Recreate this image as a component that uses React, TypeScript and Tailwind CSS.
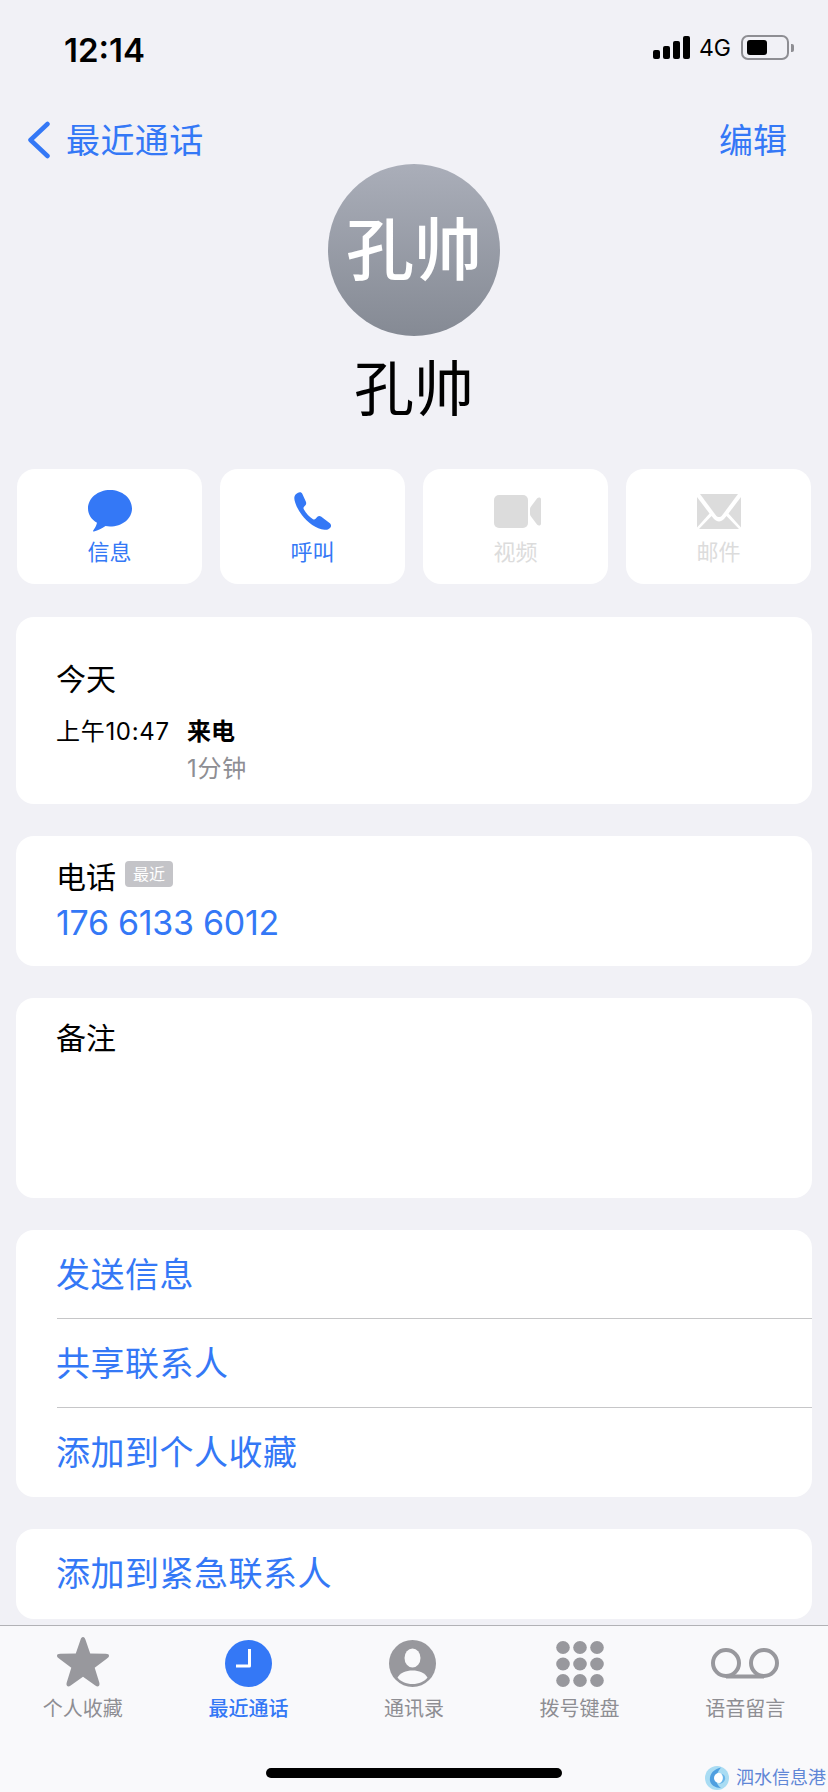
import type { ReactNode } from "react";

const BLUE = "#3478f6";

const MessageIcon = () => (
  <svg width="46" height="42" viewBox="0 0 46 42">
    <path
      fill={BLUE}
      d="M23 0C35 0 45 8 45 18.500S35 36.500 23 36.500C21.400 36.500 20 36.300 18.500 36C15 38.500 11 40.500 7 41.500C6.300 41.700 5.800 41 6.200 40.500C7.800 38.500 9.300 35.800 10 32.800C4.500 29.500 1 24.500 1 18.500C1 8 11 0 23 0Z"
    />
  </svg>
);

const PhoneIcon = () => (
  <svg width="38" height="38" viewBox="0 0 38 38">
    <path
      fill={BLUE}
      d="M4 .8C6-.2 7.600.3 8.500 2.200L11.800 9.500C12.500 11 12.300 12.300 11.200 13.400L10 14.700C9.300 15.500 9.300 16.300 9.800 17.300C12.100 21.300 15.400 25 19 27.200C20 27.800 20.800 27.600 21.600 26.800L23.400 24.800C24.500 23.700 25.800 23.600 27 24.600L34.900 30.500C37.400 32.300 37.700 34.200 36 36C34.500 37.500 32.800 38 30.500 37.800C22.500 36.800 13.500 31 7.500 22.500C2.500 15.500 .2 9.200 .3 5.800C.4 3.500 1.800 1.800 4 .8Z"
    />
  </svg>
);

const VideoIcon = () => (
  <svg width="48" height="33" viewBox="0 0 48 33" className="ml-[5px]">
    <rect x="0" y="0" width="34" height="33" rx="5" fill="#dcdcdc" />
    <path
      fill="#dcdcdc"
      d="M37 11.500L43 3.500C44.300 2 47 2 47 4.500V28.500C47 31 44.300 31 43 29.500L37 21.500C36.300 20.700 36 20 36 19V14C36 13 36.300 12.300 37 11.500Z"
    />
  </svg>
);

const MailIcon = () => (
  <svg width="44" height="35" viewBox="0 0 44 35">
    <path fill="#dcdcdc" d="M3 0H41L25 21.500C23.300 23.500 20.700 23.500 19 21.500Z" />
    <path fill="#dcdcdc" d="M0 3L12.500 19.500L0 33.500Z" />
    <path fill="#dcdcdc" d="M44 3L31.500 19.500L44 33.500Z" />
    <path fill="#dcdcdc" d="M14.500 22L17 25C20 28.300 24 28.300 27 25L29.500 22L42 35H2Z" />
  </svg>
);

const StarIcon = () => (
  <svg width="52" height="50" viewBox="0 0 52 50">
    <path
      fill="#98989d"
      d="M26 0C27.200 0 27.900 1 28.400 2.400L33.200 16.500L48.700 16.800C50.800 16.800 52 17.500 52 18.700C52 19.700 51.300 20.500 50 21.500L37.700 30.700L42.200 45.300C42.600 46.800 42.700 48 42 48.800C41 49.800 39.700 49.400 38.300 48.400L26 39.800L13.700 48.400C12.300 49.400 11 49.800 10 48.800C9.300 48 9.400 46.800 9.800 45.300L14.300 30.700L2 21.500C.7 20.500 0 19.700 0 18.700C0 17.500 1.200 16.800 3.300 16.800L18.800 16.500L23.600 2.400C24.100 1 24.800 0 26 0Z"
    />
  </svg>
);

const ClockIcon = () => (
  <svg width="47" height="47" viewBox="0 0 47 47" className="mt-[3px]">
    <circle cx="23.500" cy="23.500" r="23.500" fill={BLUE} />
    <path d="M24.500 9V26H11" fill="none" stroke="#fff" strokeWidth="3" strokeLinejoin="round" />
  </svg>
);

const ContactIcon = () => (
  <svg width="47" height="47" viewBox="0 0 47 47" className="mt-[3px] mr-[3px]">
    <circle cx="23.500" cy="23.500" r="23.500" fill="#98989d" />
    <ellipse cx="23.500" cy="18" rx="8" ry="9.500" fill="#f9f9fb" />
    <path
      fill="#f9f9fb"
      d="M23.500 44C17 44 11.500 41.500 8.500 37.500C11 33 17 30.500 23.500 30.500S36 33 38.500 37.500C35.500 41.500 30 44 23.500 44Z"
    />
  </svg>
);

const KeypadIcon = () => (
  <svg width="48" height="46" viewBox="0 0 48 46" fill="#98989d" className="mt-[3px]">
    {[6.5, 23, 39.5].map((cy) =>
      [7, 24, 41].map((cx) => <ellipse key={`${cx}-${cy}`} cx={cx} cy={cy} rx="6.800" ry="6.500" />),
    )}
  </svg>
);

const VoicemailIcon = () => (
  <svg width="68" height="31" viewBox="0 0 68 31" fill="none" stroke="#98989d" strokeWidth="4" className="mt-[2px]">
    <circle cx="15" cy="15" r="13" />
    <circle cx="53" cy="15" r="13" />
    <path d="M15 28.500H53" />
  </svg>
);

const WatermarkLogo = () => (
  <svg width="26" height="24" viewBox="0 0 26 24">
    <circle cx="13" cy="12" r="12" fill="#a9dcf3" />
    <path d="M17 1.500C9 3 5 9 6 15C7 19 11 22 17 22C11 18 10 10 17 1.500Z" fill="#4f9fe0" />
    <circle cx="15" cy="12" r="5" fill="#fff" />
    <path d="M16 7C20 9 20 15 15 18C22 17 24 9 16 7Z" fill="#6bb6ea" />
  </svg>
);

const ActionButton = ({
  icon,
  label,
  active,
}: {
  icon: ReactNode;
  label: string;
  active?: boolean;
}) => (
  <div className="flex h-[115px] flex-col items-center rounded-[18px] bg-white pt-[20px]">
    <div className="flex h-[44px] items-center justify-center">{icon}</div>
    <span
      className={`mt-[4px] text-[22px] leading-[30px] ${active ? "text-[#3478f6]" : "text-[#dcdcdc]"}`}
    >
      {label}
    </span>
  </div>
);

const TabItem = ({ icon, label, active }: { icon: ReactNode; label: string; active?: boolean }) => (
  <div className="flex flex-col items-center">
    <div className="flex h-[52px] items-center justify-center">{icon}</div>
    <span
      className={`mt-[8px] text-[20px] leading-[26px] ${active ? "font-medium text-[#3478f6]" : "text-[#8e8e93]"}`}
    >
      {label}
    </span>
  </div>
);

const LinkRow = ({ label, divider }: { label: string; divider?: boolean }) => (
  <div className="pl-[41px]">
    <div
      className={`flex h-[89px] items-center text-[34px] text-[#3478f6] ${divider ? "border-b border-[#c6c6c8]" : ""}`}
    >
      <span className="ml-[-1px] tracking-[0.5px]">{label}</span>
    </div>
  </div>
);

export default function App() {
  return (
    <div className="relative flex h-[1792px] w-[828px] flex-col overflow-hidden bg-[#f1f1f6] font-['Inter','Noto_Sans_CJK_SC',sans-serif] text-black">
      <div className="h-[1625px] overflow-hidden">
        {/* status bar */}
        <div className="flex h-[118px] items-start pt-[32px] pr-[34px] pl-[64px]">
          <span className="text-[33px] leading-[36px] font-semibold">12:14</span>
          <div className="ml-auto flex items-center pt-[3px]">
            <div className="flex items-end gap-[3px]">
              <div className="h-[9px] w-[7px] rounded-[2px] bg-black" />
              <div className="h-[13px] w-[7px] rounded-[2px] bg-black" />
              <div className="h-[18px] w-[7px] rounded-[2px] bg-black" />
              <div className="h-[23px] w-[7px] rounded-[2px] bg-black" />
            </div>
            <span className="ml-[9px] text-[23px] leading-[24px]">4G</span>
            <div className="ml-[10px] flex h-[25px] w-[48px] items-center rounded-[7px] border-2 border-[#8e8e93] pl-[4px]">
              <div className="h-[15px] w-[20px] rounded-[3px] bg-black" />
            </div>
            <div className="ml-[2px] h-[8px] w-[3px] rounded-r-[2px] bg-[#8e8e93]" />
          </div>
        </div>

        {/* nav */}
        <div className="flex h-[44px] items-center pr-[41px] pl-[26px] text-[34px] text-[#3478f6]">
          <svg width="25" height="38" viewBox="0 0 25 38" fill="none">
            <path
              d="M21.500 3L4.500 19L21.500 35"
              stroke={BLUE}
              strokeWidth="4.500"
              strokeLinecap="round"
              strokeLinejoin="round"
            />
          </svg>
          <span className="ml-[15px] tracking-[0.4px]">最近通话</span>
          <span className="ml-auto">编辑</span>
        </div>

        {/* avatar */}
        <div className="mt-[2px] flex flex-col items-center">
          <div className="flex h-[172px] w-[172px] items-center justify-center rounded-full bg-gradient-to-b from-[#aaaeb9] to-[#858a94] text-[68px] leading-none font-medium text-white">
            孔帅
          </div>
          <div className="mt-[18px] h-[70px] text-[60px] leading-[70px]">孔帅</div>
        </div>

        {/* actions */}
        <div className="mt-[45px] grid grid-cols-4 gap-[18px] px-[17px]">
          <ActionButton icon={<MessageIcon />} label="信息" active />
          <ActionButton icon={<PhoneIcon />} label="呼叫" active />
          <ActionButton icon={<VideoIcon />} label="视频" />
          <ActionButton icon={<MailIcon />} label="邮件" />
        </div>

        <div className="mt-[33px] flex flex-col gap-[32px] px-[16px]">
          <div className="h-[187px] rounded-[18px] bg-white pt-[42px] pl-[41px]">
            <div className="ml-[-1px] text-[30px] leading-[40px]">今天</div>
            <div className="mt-[15px] flex text-[24px] leading-[36px]">
              <span className="ml-[-1px] w-[131px] tracking-[0.7px]">上午10:47</span>
              <div>
                <div className="font-bold">来电</div>
                <div className="mt-[1px] text-[#8e8e93] tracking-[0.8px]">1分钟</div>
              </div>
            </div>
          </div>

          <div className="h-[130px] rounded-[18px] bg-white pt-[21px] pl-[41px]">
            <div className="flex items-center">
              <span className="ml-[-1px] text-[30px] leading-[40px]">电话</span>
              <span className="mb-[6px] ml-[9px] rounded-[4px] bg-[#c4c4c8] px-[8px] text-[16px] leading-[26px] text-white">
                最近
              </span>
            </div>
            <div className="mt-[5px] ml-[-1px] text-[34px] leading-[42px] tracking-[-0.3px] text-[#3478f6]">
              176 6133 6012
            </div>
          </div>

          <div className="h-[200px] rounded-[18px] bg-white pt-[20px] pl-[40px] text-[30px] leading-[40px]">
            备注
          </div>

          <div className="rounded-[18px] bg-white">
            <LinkRow label="发送信息" divider />
            <LinkRow label="共享联系人" divider />
            <LinkRow label="添加到个人收藏" />
          </div>

          <div className="h-[90px] rounded-[18px] bg-white">
            <LinkRow label="添加到紧急联系人" />
          </div>
        </div>
      </div>

      {/* tab bar */}
      <div className="relative flex-1 border-t border-[#b2b2b6] bg-[#f9f9fb]">
        <div className="grid grid-cols-5 pt-[10px]">
          <TabItem icon={<StarIcon />} label="个人收藏" />
          <TabItem icon={<ClockIcon />} label="最近通话" active />
          <TabItem icon={<ContactIcon />} label="通讯录" />
          <TabItem icon={<KeypadIcon />} label="拨号键盘" />
          <TabItem icon={<VoicemailIcon />} label="语音留言" />
        </div>
        <div className="mx-auto mt-[46px] h-[10px] w-[296px] rounded-full bg-black" />

        {/* watermark */}
        <div className="absolute right-[2px] bottom-[2px] flex items-center gap-[6px]">
          <WatermarkLogo />
          <span className="text-[18px] leading-[24px] text-[#5f86d6]">泗水信息港</span>
        </div>
      </div>
    </div>
  );
}
